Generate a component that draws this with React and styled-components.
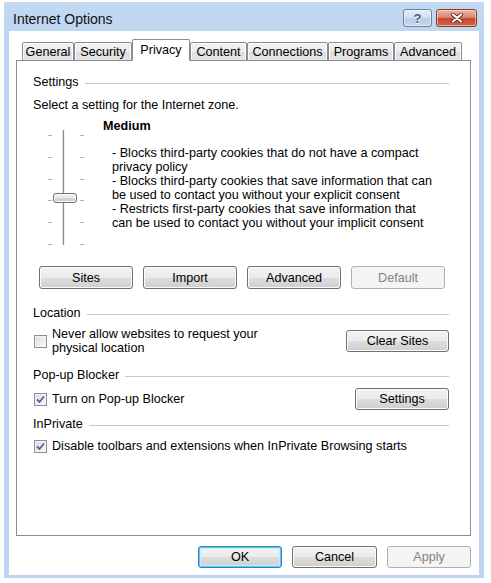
import React from 'react';
import styled, { createGlobalStyle } from 'styled-components';

const GlobalStyle = createGlobalStyle`
  body {
    margin: 0;
    background: #fff;
    font-family: "Liberation Sans", Arial, sans-serif;
    font-size: 12.6px;
    color: #000;
  }
`;

const Window = styled.div`
  margin: 2px 0 0 4px;
  width: 480px;
  height: 576px;
  background: linear-gradient(to bottom, #c4d9f2, #bcd5f0 40px, #bcd5f0);
  display: flex;
  flex-direction: column;
  box-sizing: border-box;
`;

const TitleBar = styled.div`
  height: 29px;
  display: flex;
  align-items: flex-start;
  justify-content: space-between;
  padding: 0 7px 0 9px;
  box-sizing: border-box;
`;

const Title = styled.div`
  font-size: 14px;
  color: #111;
  margin-top: 9px;
`;

const CaptionButtons = styled.div`
  display: flex;
  gap: 4px;
  margin-top: 7px;
`;

const CaptionButton = styled.div`
  width: ${p => p.$w}px;
  height: 18px;
  box-sizing: border-box;
  border: 1px solid ${p => (p.$close ? '#8e3a2a' : '#6f819b')};
  border-radius: 3px;
  background: ${p =>
    p.$close
      ? 'linear-gradient(to bottom, #eab1a3 0%, #da8a75 45%, #c7452b 55%, #d06a4d 100%)'
      : 'linear-gradient(to bottom, #e5eef8 0%, #d2e0f0 45%, #b9cce4 55%, #c8d9ee 100%)'};
  box-shadow: inset 0 0 0 1px rgba(255, 255, 255, 0.45);
  display: flex;
  align-items: center;
  justify-content: center;
  color: #4a5a70;
  font-weight: bold;
  font-size: 13px;
  text-shadow: 0 1px 0 #fff;
`;

const Client = styled.div`
  flex: 1;
  margin: 0 5px 3px 5px;
  background: #fff;
  padding: 8px 8px 0 7px;
  display: flex;
  flex-direction: column;
`;

const TabStrip = styled.div`
  display: flex;
  align-items: flex-end;
  margin-left: 6px;
  margin-bottom: -1px;
  position: relative;
  z-index: 1;
`;

const Tab = styled.div`
  width: ${p => p.$w}px;
  height: ${p => (p.$active ? 22 : 19)}px;
  box-sizing: border-box;
  border: 1px solid #898c95;
  border-bottom-color: ${p => (p.$active ? '#fff' : '#898c95')};
  border-radius: 2px 2px 0 0;
  background: ${p =>
    p.$active ? '#fff' : 'linear-gradient(to bottom, #f3f3f3, #ebebeb 50%, #dddddd 51%, #e5e5e5)'};
  box-shadow: ${p => (p.$active ? 'none' : 'inset 1px 1px 0 #fcfcfc, inset -1px 0 0 #fcfcfc')};
  display: flex;
  justify-content: center;
  padding-top: ${p => (p.$active ? 3 : 2)}px;
  line-height: 14px;
`;

const Panel = styled.div`
  height: 476px;
  box-sizing: border-box;
  border: 1px solid #898c95;
  background: #fff;
  padding: 14px 21px 0 16px;
  display: flex;
  flex-direction: column;
`;

const SectionHeader = styled.div`
  display: flex;
  align-items: center;
  gap: 6px;
  line-height: 15px;
  margin-top: ${p => p.$mt || 0}px;
  &::after {
    content: '';
    flex: 1;
    height: 1px;
    background: #c8c8c8;
    margin-top: 1px;
  }
`;

const Text = styled.div`
  line-height: 15px;
  margin-top: ${p => p.$mt || 0}px;
`;

const ZoneRow = styled.div`
  display: flex;
  margin-top: 6px;
`;

const Slider = styled.div`
  position: relative;
  width: 36px;
  height: 115px;
  margin: 11px 0 0 15px;
`;

const Ticks = styled.div`
  height: 110px;
  padding-top: 5px;
  display: flex;
  flex-direction: column;
  justify-content: space-between;
`;

const TickRow = styled.div`
  display: flex;
  justify-content: space-between;
  &::before,
  &::after {
    content: '';
    width: 4px;
    height: 1px;
    background: #b4b4b4;
  }
`;

const Track = styled.div`
  position: absolute;
  left: 15px;
  top: 0;
  width: 1px;
  height: 115px;
  background: #8a8a8a;
  box-shadow: -1px 0 0 #e2e2e2, 1px 0 0 #f0f0f0;
`;

const Thumb = styled.div`
  position: absolute;
  left: 5px;
  top: 63px;
  width: 24px;
  height: 10px;
  box-sizing: border-box;
  border: 1px solid #707070;
  border-radius: 3px;
  background: linear-gradient(to bottom, #f4f4f4, #e8e8e8 50%, #d6d6d6 51%, #cdcdcd);
  box-shadow: inset 0 0 0 1px #fbfbfb;
`;

const Description = styled.div`
  margin-left: 19px;
`;

const Level = styled.div`
  font-weight: bold;
  line-height: 14px;
`;

const Bullets = styled.div`
  margin: 13px 0 0 9px;
`;

const Line = styled.div`
  line-height: 14px;
  white-space: nowrap;
`;

const ButtonRow = styled.div`
  display: flex;
  gap: 10px;
  margin: ${p => p.$m};
  justify-content: ${p => p.$justify || 'flex-start'};
`;

const Button = styled.div`
  width: ${p => p.$w}px;
  height: ${p => p.$h || 22}px;
  box-sizing: border-box;
  border: 1px solid ${p => (p.$disabled ? '#adb2b5' : p.$default ? '#3c7fb1' : '#707070')};
  border-radius: 3px;
  background: ${p =>
    p.$disabled
      ? '#f4f4f4'
      : 'linear-gradient(to bottom, #f2f2f2 0%, #ebebeb 50%, #dddddd 51%, #cfcfcf 100%)'};
  box-shadow: ${p =>
    p.$disabled ? 'none' : p.$default ? 'inset 0 0 0 1px #48d0f8, inset 0 0 0 2px #c6eefc' : 'inset 0 0 0 1px #fbfbfb'};
  color: ${p => (p.$disabled ? '#838383' : '#000')};
  display: flex;
  align-items: center;
  justify-content: center;
`;

const OptionRow = styled.div`
  display: flex;
  align-items: center;
  justify-content: space-between;
  margin-top: ${p => p.$mt}px;
`;

const CheckLabel = styled.label`
  display: flex;
  align-items: center;
  gap: 5px;
  margin-left: 1px;
  line-height: 14px;
`;

const Box = styled.span`
  width: 13px;
  height: 13px;
  box-sizing: border-box;
  border: 1px solid #8e8f8f;
  background: linear-gradient(135deg, #dcdcdc, #fbfbfb);
  box-shadow: inset 0 0 0 1px #f4f4f4;
  display: flex;
  align-items: center;
  justify-content: center;
  flex-shrink: 0;
`;

const Check = ({ checked, children }) => (
  <CheckLabel>
    <Box>
      {checked && (
        <svg width="9" height="9" viewBox="0 0 9 9">
          <path d="M1 4.5 L3.5 7 L8 1.5" fill="none" stroke="#4b62a0" strokeWidth="1.8" />
        </svg>
      )}
    </Box>
    <span>{children}</span>
  </CheckLabel>
);

const tabs = [
  ['General', 52],
  ['Security', 58],
  ['Privacy', 58],
  ['Content', 57],
  ['Connections', 81],
  ['Programs', 66],
  ['Advanced', 68],
];

const lines = [
  '- Blocks third-party cookies that do not have a compact',
  'privacy policy',
  '- Blocks third-party cookies that save information that can',
  'be used to contact you without your explicit consent',
  '- Restricts first-party cookies that save information that',
  'can be used to contact you without your implicit consent',
];

export default function App() {
  return (
    <>
      <GlobalStyle />
      <Window>
        <TitleBar>
          <Title>Internet Options</Title>
          <CaptionButtons>
            <CaptionButton $w={29}>?</CaptionButton>
            <CaptionButton $w={41} $close>
              <svg width="14" height="10" viewBox="0 0 14 10">
                <path d="M3 1.5 L11 8.5 M11 1.5 L3 8.5" stroke="#6b2a1e" strokeWidth="4" strokeLinecap="round" />
                <path d="M3 1.5 L11 8.5 M11 1.5 L3 8.5" stroke="#fff" strokeWidth="2.2" strokeLinecap="round" />
              </svg>
            </CaptionButton>
          </CaptionButtons>
        </TitleBar>
        <Client>
          <TabStrip>
            {tabs.map(([name, w]) => (
              <Tab key={name} $w={w} $active={name === 'Privacy'}>
                {name}
              </Tab>
            ))}
          </TabStrip>
          <Panel>
            <SectionHeader>Settings</SectionHeader>
            <Text $mt={8}>Select a setting for the Internet zone.</Text>
            <ZoneRow>
              <Slider>
                <Ticks>
                  {[0, 1, 2, 3, 4, 5].map(i => (
                    <TickRow key={i} />
                  ))}
                </Ticks>
                <Track />
                <Thumb />
              </Slider>
              <Description>
                <Level>Medium</Level>
                <Bullets>
                  {lines.map(l => (
                    <Line key={l}>{l}</Line>
                  ))}
                </Bullets>
              </Description>
            </ZoneRow>
            <ButtonRow $m="21px 0 0 6px">
              <Button $w={94} $h={23}>Sites</Button>
              <Button $w={94} $h={23}>Import</Button>
              <Button $w={94} $h={23}>Advanced</Button>
              <Button $w={94} $h={23} $disabled>Default</Button>
            </ButtonRow>

            <SectionHeader $mt={17}>Location</SectionHeader>
            <OptionRow $mt={6}>
              <Check>
                Never allow websites to request your
                <br />
                physical location
              </Check>
              <Button $w={103}>Clear Sites</Button>
            </OptionRow>

            <SectionHeader $mt={13}>Pop-up Blocker</SectionHeader>
            <OptionRow $mt={5}>
              <Check checked>Turn on Pop-up Blocker</Check>
              <Button $w={94}>Settings</Button>
            </OptionRow>

            <SectionHeader $mt={7}>InPrivate</SectionHeader>
            <OptionRow $mt={7}>
              <Check checked>Disable toolbars and extensions when InPrivate Browsing starts</Check>
            </OptionRow>
          </Panel>
          <ButtonRow $m="10px 0 0 0" $justify="flex-end">
            <Button $w={84} $default>OK</Button>
            <Button $w={85}>Cancel</Button>
            <Button $w={84} $disabled>Apply</Button>
          </ButtonRow>
        </Client>
      </Window>
    </>
  );
}
